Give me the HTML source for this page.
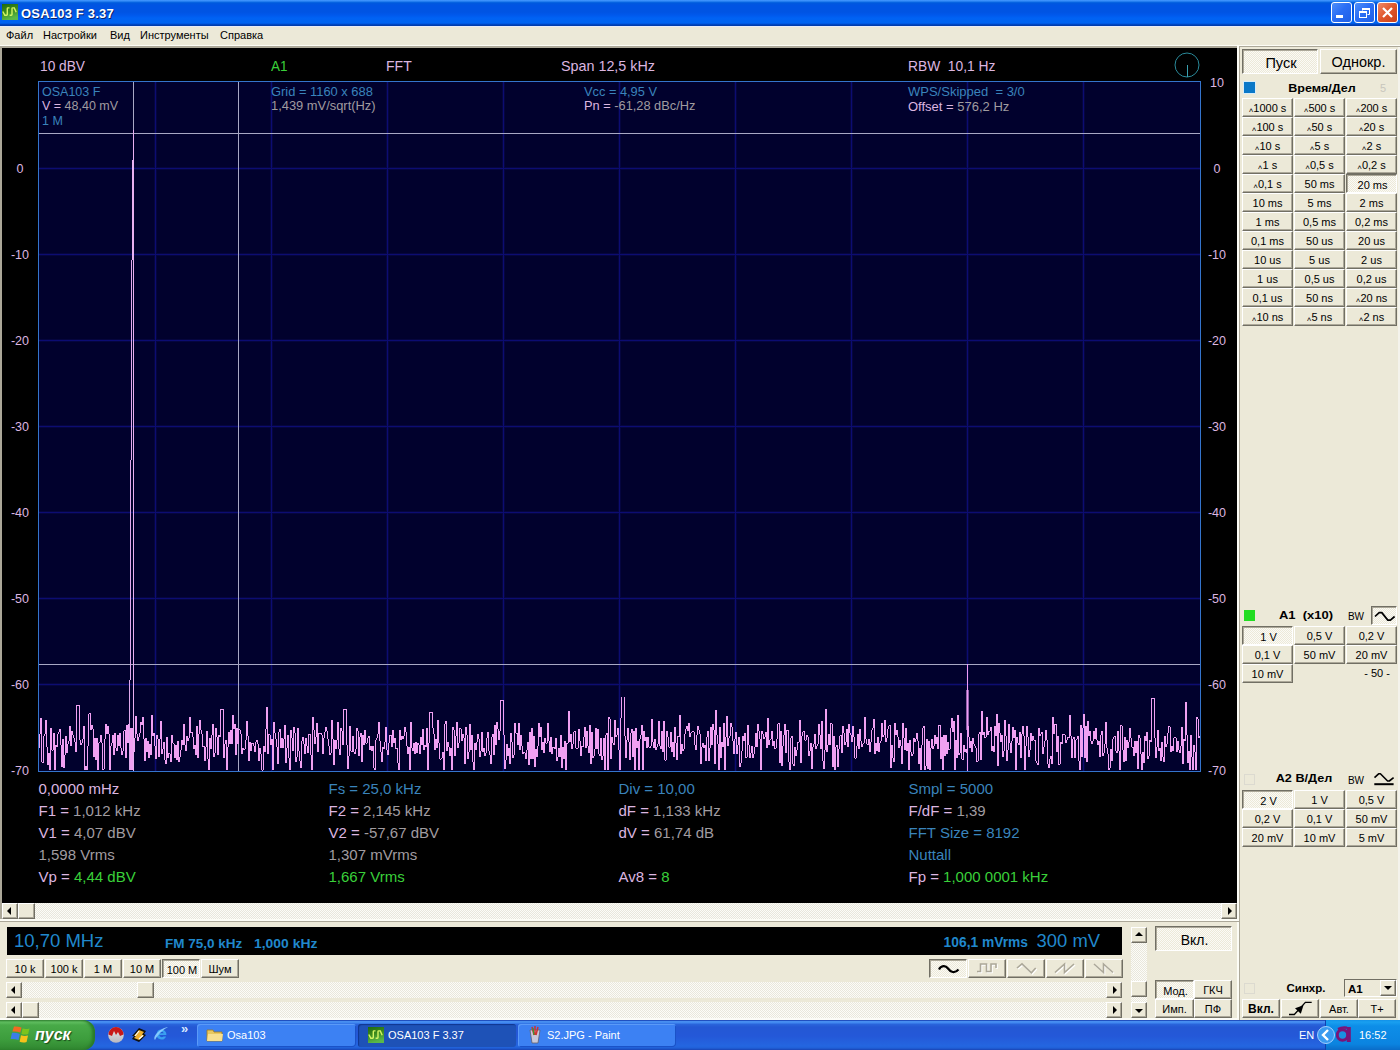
<!DOCTYPE html>
<html><head><meta charset="utf-8"><style>
html,body{margin:0;padding:0;width:1400px;height:1050px;overflow:hidden;background:#ece9d8;position:relative;font-family:"Liberation Sans", sans-serif;}
.t{position:absolute;white-space:pre;line-height:1;font-family:"Liberation Sans", sans-serif;}
.b{position:absolute;box-sizing:border-box;background:#ece9d8;}
.bu{border-top:1px solid #fff;border-left:1px solid #fff;border-right:1px solid #716f64;border-bottom:1px solid #716f64;box-shadow:inset -1px -1px 0 #aca899;}
.bd{border-top:1px solid #716f64;border-left:1px solid #716f64;border-right:1px solid #fff;border-bottom:1px solid #fff;box-shadow:inset 1px 1px 0 #aca899;background-color:#f4f3ee;background-image:repeating-conic-gradient(#fbfaf6 0 25%, #ece9d8 0 50%);background-size:2px 2px;}
svg{position:absolute;left:0;top:0;}
</style></head><body>
<div style="position:absolute;left:0;top:0;width:1400px;height:26px;background:linear-gradient(to bottom,#3d95ff 0px,#3a8ef8 1px,#0c6de6 2px,#0059dd 3px,#0054e3 5px,#0054e3 12px,#0058ec 15px,#0062f4 18px,#0064f0 23px,#0050d8 24px,#003dad 25px,#003dad 26px);"></div>
<svg width="16" height="16" style="left:2px;top:4px" viewBox="0 0 16 16"><defs><linearGradient id="ig" x1="0" y1="0" x2="0.3" y2="1"><stop offset="0" stop-color="#1e6a10"/><stop offset="0.5" stop-color="#3c8a1c"/><stop offset="1" stop-color="#5ab84a"/></linearGradient></defs><rect width="16" height="16" fill="url(#ig)"/><path d="M0.8 7.5L2.8 11.2H4.7Q5.3 11.2 5.3 10.5V4.6Q5.3 3.9 6 3.9H7.5M7.6 11.2H9.3Q10 11.2 10 10.5V4.6Q10 3.9 10.7 3.9H12.3L14.2 8.2" fill="none" stroke="#d4f464" stroke-width="1.4"/></svg>
<div class="t " style="left:21.0px;top:7.00px;font-size:13px;color:#fff;font-weight:bold;letter-spacing:0.2px;text-shadow:1px 1px 0 #0a246a;">OSA103 F 3.37</div>
<div style="position:absolute;left:1331px;top:2px;width:21px;height:21px;box-sizing:border-box;border:1px solid #fff;border-radius:3px;background:linear-gradient(135deg,#4f8ff9 0%,#2b6ef5 45%,#1f5fe6 100%);"></div>
<div style="position:absolute;left:1354px;top:2px;width:21px;height:21px;box-sizing:border-box;border:1px solid #fff;border-radius:3px;background:linear-gradient(135deg,#4f8ff9 0%,#2b6ef5 45%,#1f5fe6 100%);"></div>
<div style="position:absolute;left:1377px;top:2px;width:21px;height:21px;box-sizing:border-box;border:1px solid #fff;border-radius:3px;background:linear-gradient(135deg,#ef8a6a 0%,#e0562a 50%,#c8401c 100%);"></div>
<div style="position:absolute;left:1336px;top:15px;width:7px;height:3px;background:#fff;"></div>
<svg width="21" height="21" style="left:1354px;top:2px" viewBox="0 0 21 21"><rect x="5.5" y="9.5" width="7" height="6" fill="none" stroke="#fff" stroke-width="1"/><rect x="5" y="9" width="8" height="2" fill="#fff"/><path d="M8.5 8.5V6.5h7v6h-2" fill="none" stroke="#fff"/><rect x="8" y="6" width="8" height="2" fill="#fff"/></svg>
<svg width="21" height="21" style="left:1377px;top:2px" viewBox="0 0 21 21"><path d="M6 6L15 15M15 6L6 15" stroke="#fff" stroke-width="2.2"/></svg>
<div style="position:absolute;left:0px;top:26px;width:1400px;height:19px;background:#ece9d8;"></div>
<div style="position:absolute;left:0px;top:26px;width:1400px;height:1px;background:#e8ecf8;"></div>
<div style="position:absolute;left:0px;top:45px;width:1400px;height:1px;background:#fdfdf6;"></div>
<div style="position:absolute;left:0px;top:46px;width:1239px;height:2px;background:#aca899;"></div>
<div class="t " style="left:6.0px;top:29.69px;font-size:11px;color:#000;font-weight:normal;">Файл</div>
<div class="t " style="left:43.0px;top:29.69px;font-size:11px;color:#000;font-weight:normal;">Настройки</div>
<div class="t " style="left:110.0px;top:29.69px;font-size:11px;color:#000;font-weight:normal;">Вид</div>
<div class="t " style="left:140.0px;top:29.69px;font-size:11px;color:#000;font-weight:normal;">Инструменты</div>
<div class="t " style="left:220.0px;top:29.69px;font-size:11px;color:#000;font-weight:normal;">Справка</div>
<div style="position:absolute;left:0px;top:46px;width:2px;height:877px;background:#aca899;"></div>
<div style="position:absolute;left:2px;top:48px;width:1235px;height:855px;background:#000;"></div>
<div style="position:absolute;left:1237px;top:46px;width:2px;height:974px;background:#fdfdf6;"></div>
<div style="position:absolute;left:1239px;top:46px;width:1px;height:974px;background:#aca899;"></div>
<div style="position:absolute;left:1239px;top:46px;width:161px;height:1px;background:#aca899;"></div>
<svg width="1400" height="1050" style="left:0;top:0" viewBox="0 0 1400 1050" shape-rendering="crispEdges">
<rect x="38" y="81" width="1163" height="691" fill="#01012d"/>
<rect x="154" y="82" width="3" height="689" fill="#05053f"/>
<rect x="270" y="82" width="3" height="689" fill="#05053f"/>
<rect x="386" y="82" width="3" height="689" fill="#05053f"/>
<rect x="502" y="82" width="3" height="689" fill="#05053f"/>
<rect x="618" y="82" width="3" height="689" fill="#05053f"/>
<rect x="734" y="82" width="3" height="689" fill="#05053f"/>
<rect x="850" y="82" width="3" height="689" fill="#05053f"/>
<rect x="966" y="82" width="3" height="689" fill="#05053f"/>
<rect x="1082" y="82" width="3" height="689" fill="#05053f"/>
<rect x="39" y="167" width="1161" height="3" fill="#05053f"/>
<rect x="39" y="253" width="1161" height="3" fill="#05053f"/>
<rect x="39" y="339" width="1161" height="3" fill="#05053f"/>
<rect x="39" y="425" width="1161" height="3" fill="#05053f"/>
<rect x="39" y="511" width="1161" height="3" fill="#05053f"/>
<rect x="39" y="597" width="1161" height="3" fill="#05053f"/>
<rect x="39" y="683" width="1161" height="3" fill="#05053f"/>
<rect x="155" y="82" width="1" height="689" fill="#0c0c72"/>
<rect x="271" y="82" width="1" height="689" fill="#0c0c72"/>
<rect x="387" y="82" width="1" height="689" fill="#0c0c72"/>
<rect x="503" y="82" width="1" height="689" fill="#0c0c72"/>
<rect x="619" y="82" width="1" height="689" fill="#0c0c72"/>
<rect x="735" y="82" width="1" height="689" fill="#0c0c72"/>
<rect x="851" y="82" width="1" height="689" fill="#0c0c72"/>
<rect x="967" y="82" width="1" height="689" fill="#0c0c72"/>
<rect x="1083" y="82" width="1" height="689" fill="#0c0c72"/>
<rect x="39" y="168" width="1161" height="1" fill="#0c0c72"/>
<rect x="39" y="254" width="1161" height="1" fill="#0c0c72"/>
<rect x="39" y="340" width="1161" height="1" fill="#0c0c72"/>
<rect x="39" y="426" width="1161" height="1" fill="#0c0c72"/>
<rect x="39" y="512" width="1161" height="1" fill="#0c0c72"/>
<rect x="39" y="598" width="1161" height="1" fill="#0c0c72"/>
<rect x="39" y="684" width="1161" height="1" fill="#0c0c72"/>
<rect x="38" y="81" width="1163" height="1" fill="#3474cc"/>
<rect x="38" y="771" width="1163" height="1" fill="#3474cc"/>
<rect x="38" y="81" width="1" height="691" fill="#3474cc"/>
<rect x="1200" y="81" width="1" height="691" fill="#3474cc"/>
<rect x="39" y="133" width="1161" height="1" fill="#a8a8c4"/>
<rect x="39" y="664" width="1161" height="1" fill="#a8a8c4"/>
<rect x="133" y="82" width="1" height="689" fill="#a8a8c4"/>
<rect x="238" y="82" width="1" height="689" fill="#a8a8c4"/>
<path d="M39 734v14M40 718v16M41 718v44M42 762v1M43 736v27M44 734v2M45 720v14M46 720v27M47 747v18M48 753v12M49 753v17M50 728v42M51 728v22M52 750v1M53 733v17M54 733v37M55 745v25M56 745v2M57 734v13M58 732v2M59 729v3M60 729v16M61 745v22M62 739v28M63 739v29M64 755v13M65 736v19M66 736v17M67 744v9M68 741v3M69 726v15M70 726v20M71 731v15M72 731v4M73 735v3M74 738v4M75 742v10M76 705v47M77 705v1M78 705v1M79 705v35M80 740v5M81 743v2M82 739v4M83 726v13M84 726v44M85 766v4M86 766v4M87 746v24M88 714v32M89 713v1M90 713v17M91 725v5M92 725v4M93 729v28M94 738v19M95 738v22M96 738v22M97 738v32M98 743v27M99 742v1M100 735v7M101 735v8M102 743v27M103 769v1M104 739v30M105 724v15M106 724v10M107 726v8M108 726v8M109 734v36M110 746v24M111 743v3M112 735v8M113 735v20M114 733v22M115 733v15M116 748v3M117 735v16M118 735v11M119 733v13M120 733v15M121 748v7M122 751v4M123 731v20M124 730v1M125 730v28M126 725v33M127 725v18M128 724v19M129 724v46M130 728v42M131 728v42M132 728v42M133 728v24M134 738v14M135 716v22M136 716v18M137 734v7M138 737v4M139 733v4M140 722v11M141 722v3M142 717v8M143 717v22M144 739v22M145 738v23M146 738v14M147 741v11M148 741v17M149 744v14M150 744v11M151 715v40M152 715v21M153 733v3M154 733v13M155 746v13M156 735v24M157 735v4M158 739v18M159 739v18M160 721v18M161 721v33M162 749v5M163 742v7M164 742v18M165 760v4M166 737v27M167 737v21M168 753v5M169 753v1M170 754v8M171 735v27M172 735v8M173 743v1M174 744v14M175 745v13M176 745v15M177 741v19M178 741v21M179 757v5M180 750v7M181 740v10M182 740v5M183 724v21M184 724v21M185 745v6M186 736v15M187 736v5M188 738v3M189 717v21M190 717v16M191 732v1M192 732v5M193 737v12M194 745v4M195 745v10M196 726v29M197 726v32M198 734v24M199 720v14M200 720v10M201 730v4M202 734v13M203 746v1M204 746v15M205 747v14M206 731v16M207 731v28M208 759v11M209 738v32M210 738v11M211 735v14M212 724v11M213 724v33M214 753v4M215 728v25M216 728v9M217 737v18M218 735v20M219 735v2M220 709v28M221 709v1M222 709v1M223 709v49M224 744v14M225 740v4M226 740v30M227 747v23M228 732v15M229 732v12M230 730v14M231 730v14M232 715v29M233 715v14M234 724v5M235 724v31M236 728v27M237 728v16M238 729v15M239 729v1M240 730v4M241 734v20M242 748v6M243 748v2M244 749v1M245 740v9M246 721v19M247 721v15M248 736v25M249 742v19M250 742v9M251 743v8M252 743v1M253 743v3M254 746v6M255 742v10M256 740v2M257 740v4M258 744v17M259 748v13M260 748v6M261 754v16M262 770v1M263 746v24M264 746v6M265 729v23M266 707v22M267 707v47M268 734v20M269 734v1M270 735v10M271 739v6M272 739v31M273 722v48M274 722v11M275 733v6M276 739v8M277 747v17M278 732v32M279 729v3M280 729v19M281 738v10M282 738v10M283 739v9M284 725v14M285 725v38M286 748v15M287 735v13M288 735v23M289 758v12M290 730v40M291 730v8M292 738v13M293 727v24M294 727v6M295 733v29M296 757v5M297 728v29M298 728v23M299 751v10M300 761v7M301 741v27M302 737v4M303 737v7M304 744v10M305 738v16M306 738v8M307 746v7M308 734v19M309 734v1M310 734v21M311 755v15M312 717v53M313 717v13M314 730v14M315 737v7M316 723v14M317 723v29M318 733v19M319 733v1M320 733v1M321 733v2M322 735v19M323 738v16M324 732v6M325 727v5M326 727v4M327 731v8M328 739v7M329 746v9M330 753v2M331 720v33M332 720v19M333 739v26M334 740v25M335 740v9M336 740v9M337 722v18M338 722v27M339 749v6M340 728v27M341 728v3M342 731v14M343 709v36M344 709v1M345 709v1M346 709v36M347 745v24M348 756v13M349 726v30M350 726v25M351 751v1M352 736v16M353 736v16M354 752v2M355 749v5M356 728v21M357 728v3M358 731v25M359 737v19M360 733v4M361 733v29M362 735v27M363 735v10M364 730v15M365 730v13M366 743v1M367 738v5M368 736v2M369 736v14M370 746v4M371 746v5M372 746v5M373 746v22M374 768v2M375 740v30M376 738v2M377 734v4M378 722v12M379 722v19M380 741v11M381 752v10M382 747v15M383 747v2M384 742v7M385 727v15M386 727v23M387 750v5M388 743v12M389 735v8M390 735v1M391 735v12M392 730v17M393 730v13M394 738v5M395 738v11M396 748v1M397 748v15M398 763v7M399 730v40M400 730v10M401 736v4M402 736v3M403 736v3M404 727v9M405 727v5M406 732v14M407 746v8M408 747v7M409 747v23M410 722v48M411 722v26M412 748v3M413 743v8M414 743v11M415 742v12M416 742v11M417 743v10M418 743v2M419 745v9M420 737v17M421 737v8M422 729v16M423 729v21M424 745v5M425 745v2M426 728v19M427 728v42M428 743v27M429 712v31M430 712v1M431 712v1M432 712v16M433 728v6M434 734v16M435 739v11M436 739v9M437 720v28M438 720v23M439 743v16M440 759v1M441 758v1M442 752v6M443 752v18M444 724v46M445 721v3M446 721v30M447 742v9M448 742v5M449 747v9M450 748v8M451 748v22M452 727v43M453 727v3M454 730v26M455 736v20M456 722v14M457 722v26M458 743v5M459 728v15M460 728v1M461 729v12M462 734v7M463 734v4M464 738v26M465 727v37M466 727v8M467 735v24M468 752v7M469 724v28M470 724v26M471 735v15M472 735v27M473 762v8M474 743v27M475 743v7M476 742v8M477 734v8M478 734v5M479 739v18M480 751v6M481 732v19M482 732v20M483 748v4M484 748v8M485 753v3M486 738v15M487 732v6M488 732v19M489 751v4M490 755v9M491 737v27M492 734v3M493 734v21M494 725v30M495 725v20M496 722v23M497 722v7M498 729v11M499 731v9M500 700v31M501 700v1M502 700v1M503 700v35M504 735v34M505 760v9M506 744v16M507 744v12M508 748v8M509 748v16M510 733v31M511 733v9M512 742v16M513 755v3M514 723v32M515 723v10M516 733v1M517 733v12M518 723v22M519 723v27M520 735v15M521 735v11M522 746v8M523 752v2M524 752v1M525 753v6M526 750v9M527 742v8M528 742v23M529 732v33M530 732v27M531 728v31M532 728v31M533 736v23M534 736v31M535 749v18M536 749v8M537 746v11M538 723v23M539 723v14M540 727v10M541 727v23M542 742v8M543 742v11M544 738v15M545 738v5M546 743v1M547 723v20M548 723v18M549 741v11M550 737v15M551 737v17M552 747v7M553 747v1M554 747v2M555 738v11M556 738v23M557 757v4M558 748v9M559 748v9M560 735v22M561 735v33M562 747v21M563 747v12M564 741v18M565 741v29M566 743v27M567 743v1M568 711v32M569 711v31M570 734v8M571 734v15M572 744v5M573 732v12M574 731v1M575 731v17M576 748v1M577 748v1M578 729v19M579 729v12M580 741v15M581 746v10M582 746v1M583 737v10M584 727v10M585 727v21M586 731v17M587 731v15M588 746v7M589 725v28M590 725v39M591 732v32M592 732v26M593 756v2M594 749v7M595 728v21M596 728v21M597 729v20M598 729v25M599 754v2M600 738v18M601 738v22M602 756v4M603 738v18M604 738v32M605 735v35M606 733v2M607 733v37M608 717v53M609 717v2M610 719v40M611 737v22M612 737v6M613 743v2M614 720v25M615 720v17M616 735v2M617 728v7M618 728v22M619 750v20M620 718v52M621 697v21M624 697v39M625 736v22M626 740v18M627 728v12M628 728v14M629 742v18M630 733v27M631 729v4M632 729v28M633 731v26M634 731v39M635 728v42M636 728v20M637 741v7M638 741v29M639 739v31M640 735v4M641 725v10M642 725v45M643 731v39M644 731v10M645 737v4M646 737v11M647 737v11M648 737v10M649 747v1M650 746v2M651 719v27M652 719v23M653 742v6M654 739v9M655 739v11M656 747v3M657 744v3M658 721v23M659 721v25M660 746v3M661 731v18M662 731v21M663 721v31M664 721v39M665 760v1M666 731v29M667 731v6M668 737v10M669 747v1M670 732v15M671 732v20M672 742v10M673 742v15M674 727v30M675 727v16M676 743v17M677 736v24M678 736v1M679 715v22M680 715v39M681 744v10M682 744v7M683 749v2M684 734v15M685 729v5M686 726v3M687 726v5M688 723v8M689 723v14M690 733v4M691 732v1M692 731v1M693 731v1M694 732v13M695 745v5M696 735v15M697 726v9M698 726v4M699 730v4M700 734v30M701 747v17M702 743v4M703 743v5M704 745v3M705 745v16M706 737v24M707 731v6M708 731v30M709 748v13M710 727v21M711 727v18M712 724v21M713 724v6M714 730v34M715 710v54M716 710v25M717 735v9M718 744v26M719 727v43M720 727v31M721 742v16M722 742v5M723 723v24M724 723v47M725 737v33M726 716v21M727 716v30M728 738v8M729 736v2M730 723v13M731 723v4M732 727v14M733 741v13M734 739v15M735 732v7M736 732v22M737 745v9M738 737v8M739 737v30M740 763v4M741 751v12M742 736v15M743 736v5M744 733v8M745 733v25M746 757v1M747 725v32M748 725v20M749 745v13M750 753v5M751 746v7M752 746v12M753 754v4M754 747v7M755 733v14M756 733v14M757 724v23M758 724v7M759 731v8M760 739v31M761 731v39M762 731v3M763 734v5M764 737v2M765 732v5M766 732v16M767 718v30M768 718v27M769 740v5M770 739v1M771 731v8M772 731v15M773 741v5M774 741v8M775 748v1M776 739v9M777 724v15M778 723v1M779 723v40M780 731v32M781 731v35M782 746v20M783 735v11M784 724v11M785 724v29M786 730v23M787 730v1M788 730v32M789 762v8M790 738v32M791 736v2M792 736v28M793 764v2M794 747v19M795 747v9M796 750v6M797 742v8M798 742v1M799 720v22M800 720v43M801 736v27M802 732v4M803 731v1M804 731v9M805 740v1M806 735v5M807 735v2M808 737v19M809 751v5M810 743v8M811 743v26M812 747v22M813 744v3M814 734v10M815 734v15M816 746v3M817 744v2M818 724v20M819 724v11M820 735v14M821 721v28M822 721v40M823 761v8M824 750v19M825 709v41M826 709v43M827 745v7M828 734v11M829 734v11M830 723v22M831 723v1M832 724v43M833 736v31M834 736v34M835 747v23M836 745v2M837 745v22M838 749v18M839 736v13M840 735v1M841 735v18M842 726v27M843 726v7M844 733v12M845 742v3M846 729v13M847 729v18M848 724v23M849 724v9M850 733v2M851 735v7M852 726v16M853 726v11M854 737v21M855 758v1M856 746v12M857 734v12M858 734v15M859 729v20M860 729v12M861 741v6M862 744v3M863 743v1M864 717v26M865 717v22M866 739v5M867 744v1M868 739v6M869 739v13M870 742v10M871 730v12M872 728v2M873 719v9M874 719v35M875 743v11M876 743v8M877 737v14M878 737v15M879 743v9M880 741v2M881 723v18M882 723v14M883 735v2M884 720v15M885 720v22M886 738v4M887 729v9M888 726v3M889 725v1M890 725v43M891 745v23M892 745v13M893 758v4M894 723v39M895 723v12M896 730v5M897 730v7M898 737v11M899 740v8M900 740v6M901 746v18M902 723v41M903 723v15M904 738v12M905 728v22M906 728v23M907 743v8M908 743v27M909 740v30M910 740v12M911 752v4M912 754v2M913 738v16M914 738v4M915 739v3M916 733v6M917 733v8M918 741v23M919 748v16M920 748v22M921 745v25M922 728v17M923 726v2M924 726v44M925 766v4M926 739v27M927 739v30M928 741v28M929 741v29M930 748v22M931 739v9M932 739v10M933 746v3M934 735v11M935 735v9M936 737v7M937 737v12M938 725v24M939 725v1M940 725v34M941 737v22M942 737v33M943 735v35M944 735v21M945 735v21M946 735v19M947 742v12M948 742v8M949 749v1M950 728v21M951 718v10M952 718v14M953 721v11M954 721v49M955 740v30M956 740v18M957 715v43M958 715v40M959 753v2M960 733v20M961 733v26M962 759v1M963 745v15M964 745v7M965 749v3M966 749v4M967 726v27M968 726v11M969 737v11M970 741v7M971 741v11M972 738v14M973 738v6M974 744v2M975 746v2M976 748v14M977 761v1M978 734v27M979 732v2M980 732v28M981 711v49M982 711v24M983 732v3M984 732v6M985 737v1M986 717v20M987 717v18M988 731v4M989 731v1M990 727v4M991 727v24M992 746v5M993 746v6M994 726v26M995 726v10M996 714v22M997 714v52M998 723v43M999 723v10M1000 733v9M1001 735v7M1002 735v22M1003 751v6M1004 720v31M1005 720v16M1006 736v25M1007 750v11M1008 724v26M1009 724v19M1010 743v10M1011 741v12M1012 727v14M1013 727v11M1014 730v8M1015 730v40M1016 737v33M1017 737v6M1018 743v2M1019 732v13M1020 732v26M1021 734v24M1022 726v8M1023 726v10M1024 736v34M1025 746v24M1026 726v20M1027 726v11M1028 737v20M1029 750v7M1030 733v17M1031 733v8M1032 736v5M1033 736v4M1034 740v1M1035 740v21M1036 761v2M1037 763v2M1038 728v37M1039 728v8M1040 734v2M1041 732v2M1042 732v22M1043 747v7M1044 741v6M1045 730v11M1046 730v10M1047 740v24M1048 764v4M1049 759v9M1050 756v3M1051 756v8M1052 717v47M1053 717v17M1054 724v10M1055 724v1M1056 724v28M1057 736v16M1058 736v29M1059 764v1M1060 742v22M1061 742v2M1062 734v10M1063 734v1M1064 734v1M1065 735v8M1066 740v3M1067 737v3M1068 737v1M1069 715v23M1070 715v21M1071 736v22M1072 739v19M1073 737v2M1074 737v21M1075 740v18M1076 739v1M1077 736v3M1078 736v25M1079 761v9M1080 725v45M1081 725v32M1082 728v29M1083 714v14M1084 714v44M1085 726v32M1086 726v36M1087 721v41M1088 721v15M1089 731v5M1090 731v10M1091 741v3M1092 741v3M1093 731v10M1094 731v8M1095 728v11M1096 728v12M1097 740v5M1098 741v4M1099 741v16M1100 735v22M1101 731v4M1102 731v25M1103 753v3M1104 744v9M1105 722v22M1106 722v26M1107 748v6M1108 754v16M1109 768v2M1110 749v19M1111 749v12M1112 739v22M1113 737v2M1114 736v1M1115 736v15M1116 751v2M1117 731v22M1118 731v20M1119 751v19M1120 725v45M1121 725v1M1122 726v24M1123 750v12M1124 737v25M1125 737v24M1126 740v21M1127 740v8M1128 742v6M1129 728v14M1130 728v10M1131 738v9M1132 747v1M1133 747v9M1134 741v15M1135 741v12M1136 741v12M1137 741v28M1138 735v34M1139 735v3M1140 738v16M1141 754v16M1142 752v18M1143 752v11M1144 736v27M1145 736v5M1146 732v9M1147 732v27M1148 756v3M1149 740v16M1150 740v2M1151 698v44M1152 698v1M1153 698v1M1154 698v40M1155 738v20M1156 747v11M1157 730v17M1158 730v21M1159 748v3M1160 748v13M1161 742v19M1162 742v15M1163 757v5M1164 736v26M1165 736v11M1166 744v3M1167 733v11M1168 726v7M1169 726v1M1170 727v25M1171 746v6M1172 746v5M1173 738v13M1174 737v1M1175 737v1M1176 738v14M1177 741v11M1178 741v9M1179 750v3M1180 746v7M1181 727v19M1182 727v37M1183 739v25M1184 739v2M1185 702v39M1186 702v33M1187 735v28M1188 751v12M1189 751v19M1190 735v35M1191 735v22M1192 757v13M1193 745v25M1194 745v7M1195 752v18M1196 717v53M1197 717v2M1198 719v19M1199 736v2" stroke="#f0a0f2" stroke-width="1" transform="translate(0.5,0)" fill="none"/>
<rect x="133" y="130" width="1" height="641" fill="#e8b0f0"/>
<rect x="132" y="160" width="1" height="100" fill="#e8b0f0"/>
<rect x="131" y="260" width="1" height="200" fill="#e0a8ec"/>
<rect x="130" y="460" width="1" height="220" fill="#e0a8ec"/>
<rect x="129" y="680" width="1" height="90" fill="#e0a8ec"/>
<rect x="967" y="664" width="1" height="107" fill="#f09cf4"/>
<rect x="966" y="690" width="3" height="40" fill="#f09cf4" opacity="0.6"/>
<circle cx="1187" cy="65" r="12" fill="none" stroke="#2a8a9a" stroke-width="1" shape-rendering="auto"/>
<rect x="1187" y="53" width="1" height="24" fill="#000" opacity="0"/>
<rect x="1187" y="65" width="1" height="12" fill="#3aa0b0"/>
</svg>
<div class="t " style="left:40.0px;top:58.30px;font-size:15px;color:#dcb6e0;font-weight:normal;transform: scaleX(0.915);transform-origin:left top;">10 dBV</div>
<div class="t " style="left:271.0px;top:58.30px;font-size:15px;color:#3ad03a;font-weight:normal;transform: scaleX(0.9);transform-origin:left top;">A1</div>
<div class="t " style="left:386.0px;top:58.30px;font-size:15px;color:#dcb6e0;font-weight:normal;transform: scaleX(0.935);transform-origin:left top;">FFT</div>
<div class="t " style="left:561.0px;top:58.30px;font-size:15px;color:#dcb6e0;font-weight:normal;transform: scaleX(0.955);transform-origin:left top;">Span 12,5 kHz</div>
<div class="t " style="left:908.0px;top:58.30px;font-size:15px;color:#dcb6e0;font-weight:normal;transform: scaleX(0.92);transform-origin:left top;">RBW  10,1 Hz</div>
<div class="t " style="left:42.0px;top:86.42px;font-size:12.5px;color:#3a84bc;font-weight:normal;">OSA103 F</div>
<div class="t " style="left:42.0px;top:99.92px;font-size:12.5px;color:#000;font-weight:normal;"><span style="color:#dcb6e0">V = </span><span style="color:#a09ca0">48,40 mV</span></div>
<div class="t " style="left:42.0px;top:115.42px;font-size:12.5px;color:#3a84bc;font-weight:normal;">1 M</div>
<div class="t " style="left:271.0px;top:86.08px;font-size:12.9px;color:#3a84bc;font-weight:normal;">Grid = 1160 x 688</div>
<div class="t " style="left:271.0px;top:99.58px;font-size:12.9px;color:#a09ca0;font-weight:normal;">1,439 mV/sqrt(Hz)</div>
<div class="t " style="left:584.0px;top:86.16px;font-size:12.8px;color:#3a84bc;font-weight:normal;">Vcc = 4,95 V</div>
<div class="t " style="left:584.0px;top:99.66px;font-size:12.8px;color:#000;font-weight:normal;"><span style="color:#dcb6e0">Pn = </span><span style="color:#a09ca0">-61,28 dBc/Hz</span></div>
<div class="t " style="left:908.0px;top:85.00px;font-size:13px;color:#3a84bc;font-weight:normal;">WPS/Skipped  = 3/0</div>
<div class="t " style="left:908.0px;top:99.50px;font-size:13px;color:#000;font-weight:normal;"><span style="color:#dcb6e0">Offset = </span><span style="color:#a09ca0">576,2 Hz</span></div>
<div class="t " style="left:1217.0px;top:76.92px;font-size:12.5px;color:#dcb6e0;font-weight:normal;transform:translateX(-50%);transform-origin:center top;">10</div>
<div class="t " style="left:20.0px;top:162.92px;font-size:12.5px;color:#dcb6e0;font-weight:normal;transform:translateX(-50%);transform-origin:center top;">0</div>
<div class="t " style="left:1217.0px;top:162.92px;font-size:12.5px;color:#dcb6e0;font-weight:normal;transform:translateX(-50%);transform-origin:center top;">0</div>
<div class="t " style="left:20.0px;top:248.92px;font-size:12.5px;color:#dcb6e0;font-weight:normal;transform:translateX(-50%);transform-origin:center top;">-10</div>
<div class="t " style="left:1217.0px;top:248.92px;font-size:12.5px;color:#dcb6e0;font-weight:normal;transform:translateX(-50%);transform-origin:center top;">-10</div>
<div class="t " style="left:20.0px;top:334.92px;font-size:12.5px;color:#dcb6e0;font-weight:normal;transform:translateX(-50%);transform-origin:center top;">-20</div>
<div class="t " style="left:1217.0px;top:334.92px;font-size:12.5px;color:#dcb6e0;font-weight:normal;transform:translateX(-50%);transform-origin:center top;">-20</div>
<div class="t " style="left:20.0px;top:420.92px;font-size:12.5px;color:#dcb6e0;font-weight:normal;transform:translateX(-50%);transform-origin:center top;">-30</div>
<div class="t " style="left:1217.0px;top:420.92px;font-size:12.5px;color:#dcb6e0;font-weight:normal;transform:translateX(-50%);transform-origin:center top;">-30</div>
<div class="t " style="left:20.0px;top:506.92px;font-size:12.5px;color:#dcb6e0;font-weight:normal;transform:translateX(-50%);transform-origin:center top;">-40</div>
<div class="t " style="left:1217.0px;top:506.92px;font-size:12.5px;color:#dcb6e0;font-weight:normal;transform:translateX(-50%);transform-origin:center top;">-40</div>
<div class="t " style="left:20.0px;top:592.92px;font-size:12.5px;color:#dcb6e0;font-weight:normal;transform:translateX(-50%);transform-origin:center top;">-50</div>
<div class="t " style="left:1217.0px;top:592.92px;font-size:12.5px;color:#dcb6e0;font-weight:normal;transform:translateX(-50%);transform-origin:center top;">-50</div>
<div class="t " style="left:20.0px;top:678.92px;font-size:12.5px;color:#dcb6e0;font-weight:normal;transform:translateX(-50%);transform-origin:center top;">-60</div>
<div class="t " style="left:1217.0px;top:678.92px;font-size:12.5px;color:#dcb6e0;font-weight:normal;transform:translateX(-50%);transform-origin:center top;">-60</div>
<div class="t " style="left:20.0px;top:764.92px;font-size:12.5px;color:#dcb6e0;font-weight:normal;transform:translateX(-50%);transform-origin:center top;">-70</div>
<div class="t " style="left:1217.0px;top:764.92px;font-size:12.5px;color:#dcb6e0;font-weight:normal;transform:translateX(-50%);transform-origin:center top;">-70</div>
<div class="t " style="left:38.5px;top:781.30px;font-size:15px;color:#dcb6e0;font-weight:normal;">0,0000 mHz</div>
<div class="t " style="left:38.5px;top:803.30px;font-size:15px;color:#000;font-weight:normal;"><span style="color:#dcb6e0">F1 = </span><span style="color:#a09ca0">1,012 kHz</span></div>
<div class="t " style="left:38.5px;top:825.30px;font-size:15px;color:#000;font-weight:normal;"><span style="color:#dcb6e0">V1 = </span><span style="color:#a09ca0">4,07 dBV</span></div>
<div class="t " style="left:38.5px;top:847.30px;font-size:15px;color:#a09ca0;font-weight:normal;">1,598 Vrms</div>
<div class="t " style="left:38.5px;top:869.30px;font-size:15px;color:#000;font-weight:normal;"><span style="color:#dcb6e0">Vp = </span><span style="color:#3ad03a">4,44 dBV</span></div>
<div class="t " style="left:328.5px;top:781.30px;font-size:15px;color:#3a84bc;font-weight:normal;">Fs = 25,0 kHz</div>
<div class="t " style="left:328.5px;top:803.30px;font-size:15px;color:#000;font-weight:normal;"><span style="color:#dcb6e0">F2 = </span><span style="color:#a09ca0">2,145 kHz</span></div>
<div class="t " style="left:328.5px;top:825.30px;font-size:15px;color:#000;font-weight:normal;"><span style="color:#dcb6e0">V2 = </span><span style="color:#a09ca0">-57,67 dBV</span></div>
<div class="t " style="left:328.5px;top:847.30px;font-size:15px;color:#a09ca0;font-weight:normal;">1,307 mVrms</div>
<div class="t " style="left:328.5px;top:869.30px;font-size:15px;color:#3ad03a;font-weight:normal;">1,667 Vrms</div>
<div class="t " style="left:618.5px;top:781.30px;font-size:15px;color:#3a84bc;font-weight:normal;">Div = 10,00</div>
<div class="t " style="left:618.5px;top:803.30px;font-size:15px;color:#000;font-weight:normal;"><span style="color:#dcb6e0">dF = </span><span style="color:#a09ca0">1,133 kHz</span></div>
<div class="t " style="left:618.5px;top:825.30px;font-size:15px;color:#000;font-weight:normal;"><span style="color:#dcb6e0">dV = </span><span style="color:#a09ca0">61,74 dB</span></div>
<div class="t " style="left:618.5px;top:869.30px;font-size:15px;color:#000;font-weight:normal;"><span style="color:#dcb6e0">Av8 = </span><span style="color:#3ad03a">8</span></div>
<div class="t " style="left:908.5px;top:781.30px;font-size:15px;color:#3a84bc;font-weight:normal;">Smpl = 5000</div>
<div class="t " style="left:908.5px;top:803.30px;font-size:15px;color:#000;font-weight:normal;"><span style="color:#dcb6e0">F/dF = </span><span style="color:#a09ca0">1,39</span></div>
<div class="t " style="left:908.5px;top:825.30px;font-size:15px;color:#3a84bc;font-weight:normal;">FFT Size = 8192</div>
<div class="t " style="left:908.5px;top:847.30px;font-size:15px;color:#3a84bc;font-weight:normal;">Nuttall</div>
<div class="t " style="left:908.5px;top:869.30px;font-size:15px;color:#000;font-weight:normal;"><span style="color:#dcb6e0">Fp = </span><span style="color:#3ad03a">1,000 0001 kHz</span></div>
<div class="b bd" style="left:1242px;top:49px;width:76px;height:25px;"></div>
<div class="t " style="left:1281.0px;top:55.73px;font-size:14.5px;color:#000;font-weight:normal;transform:translateX(-50%);transform-origin:center top;">Пуск</div>
<div class="b bu" style="left:1320px;top:49px;width:77px;height:25px;"></div>
<div class="t " style="left:1358.5px;top:54.73px;font-size:14.5px;color:#000;font-weight:normal;transform:translateX(-50%);transform-origin:center top;">Однокр.</div>
<div style="position:absolute;left:1244px;top:82px;width:11px;height:11px;background:#0a78c8;box-shadow:0 0 0 1px #d8ecf8;"></div>
<div class="t " style="left:1321.5px;top:82.69px;font-size:11px;color:#000;font-weight:bold;transform:translateX(-50%) scaleX(1.14);transform-origin:center top;">Время/Дел</div>
<div class="t " style="left:1383.0px;top:82.69px;font-size:11px;color:#c8c6bc;font-weight:normal;transform:translateX(-50%);transform-origin:center top;">5</div>
<div class="b bu" style="left:1242px;top:98px;width:51px;height:19px;"></div>
<div class="t " style="left:1267.5px;top:102.69px;font-size:11px;color:#000;font-weight:normal;transform:translateX(-50%);transform-origin:center top;"><span style="font-size:8px;position:relative;top:1px">˄</span>1000 s</div>
<div class="b bu" style="left:1294px;top:98px;width:51px;height:19px;"></div>
<div class="t " style="left:1319.5px;top:102.69px;font-size:11px;color:#000;font-weight:normal;transform:translateX(-50%);transform-origin:center top;"><span style="font-size:8px;position:relative;top:1px">˄</span>500 s</div>
<div class="b bu" style="left:1346px;top:98px;width:51px;height:19px;"></div>
<div class="t " style="left:1371.5px;top:102.69px;font-size:11px;color:#000;font-weight:normal;transform:translateX(-50%);transform-origin:center top;"><span style="font-size:8px;position:relative;top:1px">˄</span>200 s</div>
<div class="b bu" style="left:1242px;top:117px;width:51px;height:19px;"></div>
<div class="t " style="left:1267.5px;top:121.69px;font-size:11px;color:#000;font-weight:normal;transform:translateX(-50%);transform-origin:center top;"><span style="font-size:8px;position:relative;top:1px">˄</span>100 s</div>
<div class="b bu" style="left:1294px;top:117px;width:51px;height:19px;"></div>
<div class="t " style="left:1319.5px;top:121.69px;font-size:11px;color:#000;font-weight:normal;transform:translateX(-50%);transform-origin:center top;"><span style="font-size:8px;position:relative;top:1px">˄</span>50 s</div>
<div class="b bu" style="left:1346px;top:117px;width:51px;height:19px;"></div>
<div class="t " style="left:1371.5px;top:121.69px;font-size:11px;color:#000;font-weight:normal;transform:translateX(-50%);transform-origin:center top;"><span style="font-size:8px;position:relative;top:1px">˄</span>20 s</div>
<div class="b bu" style="left:1242px;top:136px;width:51px;height:19px;"></div>
<div class="t " style="left:1267.5px;top:140.69px;font-size:11px;color:#000;font-weight:normal;transform:translateX(-50%);transform-origin:center top;"><span style="font-size:8px;position:relative;top:1px">˄</span>10 s</div>
<div class="b bu" style="left:1294px;top:136px;width:51px;height:19px;"></div>
<div class="t " style="left:1319.5px;top:140.69px;font-size:11px;color:#000;font-weight:normal;transform:translateX(-50%);transform-origin:center top;"><span style="font-size:8px;position:relative;top:1px">˄</span>5 s</div>
<div class="b bu" style="left:1346px;top:136px;width:51px;height:19px;"></div>
<div class="t " style="left:1371.5px;top:140.69px;font-size:11px;color:#000;font-weight:normal;transform:translateX(-50%);transform-origin:center top;"><span style="font-size:8px;position:relative;top:1px">˄</span>2 s</div>
<div class="b bu" style="left:1242px;top:155px;width:51px;height:19px;"></div>
<div class="t " style="left:1267.5px;top:159.69px;font-size:11px;color:#000;font-weight:normal;transform:translateX(-50%);transform-origin:center top;"><span style="font-size:8px;position:relative;top:1px">˄</span>1 s</div>
<div class="b bu" style="left:1294px;top:155px;width:51px;height:19px;"></div>
<div class="t " style="left:1319.5px;top:159.69px;font-size:11px;color:#000;font-weight:normal;transform:translateX(-50%);transform-origin:center top;"><span style="font-size:8px;position:relative;top:1px">˄</span>0,5 s</div>
<div class="b bu" style="left:1346px;top:155px;width:51px;height:19px;"></div>
<div class="t " style="left:1371.5px;top:159.69px;font-size:11px;color:#000;font-weight:normal;transform:translateX(-50%);transform-origin:center top;"><span style="font-size:8px;position:relative;top:1px">˄</span>0,2 s</div>
<div class="b bu" style="left:1242px;top:174px;width:51px;height:19px;"></div>
<div class="t " style="left:1267.5px;top:178.69px;font-size:11px;color:#000;font-weight:normal;transform:translateX(-50%);transform-origin:center top;"><span style="font-size:8px;position:relative;top:1px">˄</span>0,1 s</div>
<div class="b bu" style="left:1294px;top:174px;width:51px;height:19px;"></div>
<div class="t " style="left:1319.5px;top:178.69px;font-size:11px;color:#000;font-weight:normal;transform:translateX(-50%);transform-origin:center top;">50 ms</div>
<div class="b bd" style="left:1346px;top:174px;width:51px;height:19px;"></div>
<div class="t " style="left:1372.5px;top:179.69px;font-size:11px;color:#000;font-weight:normal;transform:translateX(-50%);transform-origin:center top;">20 ms</div>
<div class="b bu" style="left:1242px;top:193px;width:51px;height:19px;"></div>
<div class="t " style="left:1267.5px;top:197.69px;font-size:11px;color:#000;font-weight:normal;transform:translateX(-50%);transform-origin:center top;">10 ms</div>
<div class="b bu" style="left:1294px;top:193px;width:51px;height:19px;"></div>
<div class="t " style="left:1319.5px;top:197.69px;font-size:11px;color:#000;font-weight:normal;transform:translateX(-50%);transform-origin:center top;">5 ms</div>
<div class="b bu" style="left:1346px;top:193px;width:51px;height:19px;"></div>
<div class="t " style="left:1371.5px;top:197.69px;font-size:11px;color:#000;font-weight:normal;transform:translateX(-50%);transform-origin:center top;">2 ms</div>
<div class="b bu" style="left:1242px;top:212px;width:51px;height:19px;"></div>
<div class="t " style="left:1267.5px;top:216.69px;font-size:11px;color:#000;font-weight:normal;transform:translateX(-50%);transform-origin:center top;">1 ms</div>
<div class="b bu" style="left:1294px;top:212px;width:51px;height:19px;"></div>
<div class="t " style="left:1319.5px;top:216.69px;font-size:11px;color:#000;font-weight:normal;transform:translateX(-50%);transform-origin:center top;">0,5 ms</div>
<div class="b bu" style="left:1346px;top:212px;width:51px;height:19px;"></div>
<div class="t " style="left:1371.5px;top:216.69px;font-size:11px;color:#000;font-weight:normal;transform:translateX(-50%);transform-origin:center top;">0,2 ms</div>
<div class="b bu" style="left:1242px;top:231px;width:51px;height:19px;"></div>
<div class="t " style="left:1267.5px;top:235.69px;font-size:11px;color:#000;font-weight:normal;transform:translateX(-50%);transform-origin:center top;">0,1 ms</div>
<div class="b bu" style="left:1294px;top:231px;width:51px;height:19px;"></div>
<div class="t " style="left:1319.5px;top:235.69px;font-size:11px;color:#000;font-weight:normal;transform:translateX(-50%);transform-origin:center top;">50 us</div>
<div class="b bu" style="left:1346px;top:231px;width:51px;height:19px;"></div>
<div class="t " style="left:1371.5px;top:235.69px;font-size:11px;color:#000;font-weight:normal;transform:translateX(-50%);transform-origin:center top;">20 us</div>
<div class="b bu" style="left:1242px;top:250px;width:51px;height:19px;"></div>
<div class="t " style="left:1267.5px;top:254.69px;font-size:11px;color:#000;font-weight:normal;transform:translateX(-50%);transform-origin:center top;">10 us</div>
<div class="b bu" style="left:1294px;top:250px;width:51px;height:19px;"></div>
<div class="t " style="left:1319.5px;top:254.69px;font-size:11px;color:#000;font-weight:normal;transform:translateX(-50%);transform-origin:center top;">5 us</div>
<div class="b bu" style="left:1346px;top:250px;width:51px;height:19px;"></div>
<div class="t " style="left:1371.5px;top:254.69px;font-size:11px;color:#000;font-weight:normal;transform:translateX(-50%);transform-origin:center top;">2 us</div>
<div class="b bu" style="left:1242px;top:269px;width:51px;height:19px;"></div>
<div class="t " style="left:1267.5px;top:273.69px;font-size:11px;color:#000;font-weight:normal;transform:translateX(-50%);transform-origin:center top;">1 us</div>
<div class="b bu" style="left:1294px;top:269px;width:51px;height:19px;"></div>
<div class="t " style="left:1319.5px;top:273.69px;font-size:11px;color:#000;font-weight:normal;transform:translateX(-50%);transform-origin:center top;">0,5 us</div>
<div class="b bu" style="left:1346px;top:269px;width:51px;height:19px;"></div>
<div class="t " style="left:1371.5px;top:273.69px;font-size:11px;color:#000;font-weight:normal;transform:translateX(-50%);transform-origin:center top;">0,2 us</div>
<div class="b bu" style="left:1242px;top:288px;width:51px;height:19px;"></div>
<div class="t " style="left:1267.5px;top:292.69px;font-size:11px;color:#000;font-weight:normal;transform:translateX(-50%);transform-origin:center top;">0,1 us</div>
<div class="b bu" style="left:1294px;top:288px;width:51px;height:19px;"></div>
<div class="t " style="left:1319.5px;top:292.69px;font-size:11px;color:#000;font-weight:normal;transform:translateX(-50%);transform-origin:center top;">50 ns</div>
<div class="b bu" style="left:1346px;top:288px;width:51px;height:19px;"></div>
<div class="t " style="left:1371.5px;top:292.69px;font-size:11px;color:#000;font-weight:normal;transform:translateX(-50%);transform-origin:center top;"><span style="font-size:8px;position:relative;top:1px">˄</span>20 ns</div>
<div class="b bu" style="left:1242px;top:307px;width:51px;height:19px;"></div>
<div class="t " style="left:1267.5px;top:311.69px;font-size:11px;color:#000;font-weight:normal;transform:translateX(-50%);transform-origin:center top;"><span style="font-size:8px;position:relative;top:1px">˄</span>10 ns</div>
<div class="b bu" style="left:1294px;top:307px;width:51px;height:19px;"></div>
<div class="t " style="left:1319.5px;top:311.69px;font-size:11px;color:#000;font-weight:normal;transform:translateX(-50%);transform-origin:center top;"><span style="font-size:8px;position:relative;top:1px">˄</span>5 ns</div>
<div class="b bu" style="left:1346px;top:307px;width:51px;height:19px;"></div>
<div class="t " style="left:1371.5px;top:311.69px;font-size:11px;color:#000;font-weight:normal;transform:translateX(-50%);transform-origin:center top;"><span style="font-size:8px;position:relative;top:1px">˄</span>2 ns</div>
<div style="position:absolute;left:1244px;top:610px;width:11px;height:11px;background:#22dd22;"></div>
<div class="t " style="left:1306.0px;top:610.27px;font-size:11.5px;color:#000;font-weight:bold;transform:translateX(-50%) scaleX(1.13);transform-origin:center top;">A1  (x10)</div>
<div class="t " style="left:1356.0px;top:611.53px;font-size:10px;color:#000;font-weight:normal;transform:translateX(-50%);transform-origin:center top;">BW</div>
<div class="b bd" style="left:1371px;top:606px;width:26px;height:19px;"></div>
<svg width="26" height="19" style="left:1371px;top:606px" viewBox="0 0 26 19"><path d="M4 10.5L8.2 6.6H10.8L16.8 14.1H19.4L23.6 10.5" fill="none" stroke="#000" stroke-width="1.7" stroke-linejoin="round"/></svg>
<div class="b bd" style="left:1242px;top:626px;width:51px;height:19px;"></div>
<div class="t " style="left:1268.5px;top:631.69px;font-size:11px;color:#000;font-weight:normal;transform:translateX(-50%);transform-origin:center top;">1 V</div>
<div class="b bu" style="left:1294px;top:626px;width:51px;height:19px;"></div>
<div class="t " style="left:1319.5px;top:630.69px;font-size:11px;color:#000;font-weight:normal;transform:translateX(-50%);transform-origin:center top;">0,5 V</div>
<div class="b bu" style="left:1346px;top:626px;width:51px;height:19px;"></div>
<div class="t " style="left:1371.5px;top:630.69px;font-size:11px;color:#000;font-weight:normal;transform:translateX(-50%);transform-origin:center top;">0,2 V</div>
<div class="b bu" style="left:1242px;top:645px;width:51px;height:19px;"></div>
<div class="t " style="left:1267.5px;top:649.69px;font-size:11px;color:#000;font-weight:normal;transform:translateX(-50%);transform-origin:center top;">0,1 V</div>
<div class="b bu" style="left:1294px;top:645px;width:51px;height:19px;"></div>
<div class="t " style="left:1319.5px;top:649.69px;font-size:11px;color:#000;font-weight:normal;transform:translateX(-50%);transform-origin:center top;">50 mV</div>
<div class="b bu" style="left:1346px;top:645px;width:51px;height:19px;"></div>
<div class="t " style="left:1371.5px;top:649.69px;font-size:11px;color:#000;font-weight:normal;transform:translateX(-50%);transform-origin:center top;">20 mV</div>
<div class="b bu" style="left:1242px;top:664px;width:51px;height:19px;"></div>
<div class="t " style="left:1267.5px;top:668.69px;font-size:11px;color:#000;font-weight:normal;transform:translateX(-50%);transform-origin:center top;">10 mV</div>
<div class="t " style="left:1377.0px;top:667.69px;font-size:11px;color:#000;font-weight:normal;transform:translateX(-50%);transform-origin:center top;">- 50 -</div>
<div style="position:absolute;left:1244px;top:774px;width:11px;height:11px;box-sizing:border-box;border:1px solid #dcdad0;background:#ece9d8;"></div>
<div class="t " style="left:1304.0px;top:773.27px;font-size:11.5px;color:#000;font-weight:bold;transform:translateX(-50%) scaleX(1.1);transform-origin:center top;">A2 В/Дел</div>
<div class="t " style="left:1356.0px;top:775.53px;font-size:10px;color:#000;font-weight:normal;transform:translateX(-50%);transform-origin:center top;">BW</div>
<svg width="24" height="16" style="left:1373px;top:771px" viewBox="0 0 24 16"><path d="M1.5 6.6L5.6 2.8H7.4L14.6 10H16.3L20.6 6.6" fill="none" stroke="#000" stroke-width="1.6" stroke-linejoin="round"/><rect x="1.3" y="12.2" width="19.3" height="2" fill="#000"/></svg>
<div class="b bd" style="left:1242px;top:790px;width:51px;height:19px;"></div>
<div class="t " style="left:1268.5px;top:795.69px;font-size:11px;color:#000;font-weight:normal;transform:translateX(-50%);transform-origin:center top;">2 V</div>
<div class="b bu" style="left:1294px;top:790px;width:51px;height:19px;"></div>
<div class="t " style="left:1319.5px;top:794.69px;font-size:11px;color:#000;font-weight:normal;transform:translateX(-50%);transform-origin:center top;">1 V</div>
<div class="b bu" style="left:1346px;top:790px;width:51px;height:19px;"></div>
<div class="t " style="left:1371.5px;top:794.69px;font-size:11px;color:#000;font-weight:normal;transform:translateX(-50%);transform-origin:center top;">0,5 V</div>
<div class="b bu" style="left:1242px;top:809px;width:51px;height:19px;"></div>
<div class="t " style="left:1267.5px;top:813.69px;font-size:11px;color:#000;font-weight:normal;transform:translateX(-50%);transform-origin:center top;">0,2 V</div>
<div class="b bu" style="left:1294px;top:809px;width:51px;height:19px;"></div>
<div class="t " style="left:1319.5px;top:813.69px;font-size:11px;color:#000;font-weight:normal;transform:translateX(-50%);transform-origin:center top;">0,1 V</div>
<div class="b bu" style="left:1346px;top:809px;width:51px;height:19px;"></div>
<div class="t " style="left:1371.5px;top:813.69px;font-size:11px;color:#000;font-weight:normal;transform:translateX(-50%);transform-origin:center top;">50 mV</div>
<div class="b bu" style="left:1242px;top:828px;width:51px;height:19px;"></div>
<div class="t " style="left:1267.5px;top:832.69px;font-size:11px;color:#000;font-weight:normal;transform:translateX(-50%);transform-origin:center top;">20 mV</div>
<div class="b bu" style="left:1294px;top:828px;width:51px;height:19px;"></div>
<div class="t " style="left:1319.5px;top:832.69px;font-size:11px;color:#000;font-weight:normal;transform:translateX(-50%);transform-origin:center top;">10 mV</div>
<div class="b bu" style="left:1346px;top:828px;width:51px;height:19px;"></div>
<div class="t " style="left:1371.5px;top:832.69px;font-size:11px;color:#000;font-weight:normal;transform:translateX(-50%);transform-origin:center top;">5 mV</div>
<div style="position:absolute;left:1244px;top:983px;width:11px;height:11px;box-sizing:border-box;border:1px solid #dcdad0;background:#ece9d8;"></div>
<div class="t " style="left:1306.0px;top:983.27px;font-size:11.5px;color:#000;font-weight:bold;transform:translateX(-50%);transform-origin:center top;">Синхр.</div>
<div style="position:absolute;left:1344px;top:979px;width:53px;height:18px;box-sizing:border-box;border-top:1px solid #716f64;border-left:1px solid #716f64;border-bottom:1px solid #fff;border-right:1px solid #fff;background:#ece9d8;"></div>
<div class="t " style="left:1348.0px;top:984.27px;font-size:11.5px;color:#000;font-weight:bold;">A1</div>
<div class="b bu" style="left:1380px;top:980px;width:16px;height:16px;"></div>
<svg width="16" height="16" style="left:1380px;top:980px" viewBox="0 0 16 16"><path d="M4 6h8l-4 4z" fill="#000"/></svg>
<div class="b bu" style="left:1242px;top:999px;width:38px;height:19px;"></div>
<div class="t " style="left:1261.0px;top:1002.84px;font-size:12px;color:#000;font-weight:bold;transform:translateX(-50%);transform-origin:center top;">Вкл.</div>
<div class="b bu" style="left:1281px;top:999px;width:38px;height:19px;"></div>
<svg width="38" height="19" style="left:1281px;top:999px" viewBox="0 0 38 19"><path d="M8 15.5h5.3L24.4 3.4h6.3" fill="none" stroke="#000" stroke-width="1.3"/><path d="M14 9.3L22.5 6.3L19.8 14.8z" fill="#000"/></svg>
<div class="b bu" style="left:1320px;top:999px;width:38px;height:19px;"></div>
<div class="t " style="left:1339.0px;top:1003.69px;font-size:11px;color:#000;font-weight:normal;transform:translateX(-50%);transform-origin:center top;">Авт.</div>
<div class="b bu" style="left:1358px;top:999px;width:38px;height:19px;"></div>
<div class="t " style="left:1377.0px;top:1003.69px;font-size:11px;color:#000;font-weight:normal;transform:translateX(-50%);transform-origin:center top;">T+</div>
<div style="position:absolute;left:2px;top:903px;width:1235px;height:16px;background-color:#f4f3ee;background-image:repeating-conic-gradient(#fcfcf8 0 25%, #e9e7dc 0 50%);background-size:2px 2px;"></div>
<div class="b bu" style="left:2px;top:903px;width:16px;height:16px;"></div>
<svg width="16" height="16" style="left:2px;top:903px" viewBox="0 0 16 16"><path d="M5 8l4-4v8z" fill="#000"/></svg>
<div class="b bu" style="left:1221px;top:903px;width:16px;height:16px;"></div>
<svg width="16" height="16" style="left:1221px;top:903px" viewBox="0 0 16 16"><path d="M11 8l-4-4v8z" fill="#000"/></svg>
<div class="b bu" style="left:18px;top:903px;width:17px;height:16px;"></div>
<div style="position:absolute;left:0px;top:919px;width:1239px;height:2px;background:#fdfdf6;"></div>
<div style="position:absolute;left:0px;top:921px;width:1239px;height:1px;background:#aca899;"></div>
<div style="position:absolute;left:0px;top:922px;width:2px;height:98px;background:#ece9d8;"></div>
<div style="position:absolute;left:7px;top:927px;width:1115px;height:28px;background:#000;"></div>
<div class="t " style="left:14.0px;top:932.34px;font-size:18.5px;color:#2088cc;font-weight:normal;">10,70 MHz</div>
<div class="t " style="left:165.0px;top:936.57px;font-size:13.5px;color:#2088cc;font-weight:bold;">FM 75,0 kHz</div>
<div class="t " style="left:254.0px;top:936.57px;font-size:13.5px;color:#2088cc;font-weight:bold;transform: scaleX(1.03);transform-origin:left top;">1,000 kHz</div>
<div class="t " style="left:1028.0px;top:936.32px;font-size:13.8px;color:#2088cc;font-weight:bold;transform:translateX(-100%);transform-origin:right top;">106,1 mVrms</div>
<div class="t " style="left:1100.0px;top:932.42px;font-size:18.4px;color:#2088cc;font-weight:normal;transform:translateX(-100%);transform-origin:right top;">300 mV</div>
<div class="b bu" style="left:6px;top:959px;width:38px;height:19px;"></div>
<div class="t " style="left:25.0px;top:963.69px;font-size:11px;color:#000;font-weight:normal;transform:translateX(-50%);transform-origin:center top;">10 k</div>
<div class="b bu" style="left:45px;top:959px;width:38px;height:19px;"></div>
<div class="t " style="left:64.0px;top:963.69px;font-size:11px;color:#000;font-weight:normal;transform:translateX(-50%);transform-origin:center top;">100 k</div>
<div class="b bu" style="left:84px;top:959px;width:38px;height:19px;"></div>
<div class="t " style="left:103.0px;top:963.69px;font-size:11px;color:#000;font-weight:normal;transform:translateX(-50%);transform-origin:center top;">1 M</div>
<div class="b bu" style="left:123px;top:959px;width:38px;height:19px;"></div>
<div class="t " style="left:142.0px;top:963.69px;font-size:11px;color:#000;font-weight:normal;transform:translateX(-50%);transform-origin:center top;">10 M</div>
<div class="b bd" style="left:162px;top:959px;width:38px;height:19px;"></div>
<div class="t " style="left:182.0px;top:964.69px;font-size:11px;color:#000;font-weight:normal;transform:translateX(-50%);transform-origin:center top;">100 M</div>
<div class="b bu" style="left:201px;top:959px;width:38px;height:19px;"></div>
<div class="t " style="left:220.0px;top:963.69px;font-size:11px;color:#000;font-weight:normal;transform:translateX(-50%);transform-origin:center top;">Шум</div>
<div class="b bd" style="left:929px;top:959px;width:38px;height:19px;"></div>
<svg width="38" height="19" style="left:929px;top:959px" viewBox="0 0 38 19"><path d="M10 10.5C12 6.5 16.5 6 19 9.5S25.5 15 29.5 10.5" fill="none" stroke="#000" stroke-width="2.2"/></svg>
<div class="b bu" style="left:968px;top:959px;width:38px;height:19px;"></div>
<svg width="38" height="19" style="left:968px;top:959px" viewBox="0 0 38 19"><path d="M9 12.5h3.5v-7.5h6v7.5h4.5v-7.5h5v4" fill="none" stroke="#fff" stroke-width="1.6" transform="translate(1,1)"/><path d="M9 12.5h3.5v-7.5h6v7.5h4.5v-7.5h5v4" fill="none" stroke="#aca899" stroke-width="1.6"/></svg>
<div class="b bu" style="left:1007px;top:959px;width:38px;height:19px;"></div>
<svg width="38" height="19" style="left:1007px;top:959px" viewBox="0 0 38 19"><path d="M10 9L15 4.8L24.4 13.8L28.7 9" fill="none" stroke="#fff" stroke-width="1.6" transform="translate(1,1)"/><path d="M10 9L15 4.8L24.4 13.8L28.7 9" fill="none" stroke="#aca899" stroke-width="1.6"/></svg>
<div class="b bu" style="left:1046px;top:959px;width:38px;height:19px;"></div>
<svg width="38" height="19" style="left:1046px;top:959px" viewBox="0 0 38 19"><path d="M9 13.5L18.5 5V13.5L28 5" fill="none" stroke="#fff" stroke-width="1.6" transform="translate(1,1)"/><path d="M9 13.5L18.5 5V13.5L28 5" fill="none" stroke="#aca899" stroke-width="1.6"/></svg>
<div class="b bu" style="left:1085px;top:959px;width:38px;height:19px;"></div>
<svg width="38" height="19" style="left:1085px;top:959px" viewBox="0 0 38 19"><path d="M9 5L18.5 13.5V5L28 13.5" fill="none" stroke="#fff" stroke-width="1.6" transform="translate(1,1)"/><path d="M9 5L18.5 13.5V5L28 13.5" fill="none" stroke="#aca899" stroke-width="1.6"/></svg>
<div style="position:absolute;left:6px;top:982px;width:1116px;height:16px;background-color:#f4f3ee;background-image:repeating-conic-gradient(#fcfcf8 0 25%, #e9e7dc 0 50%);background-size:2px 2px;"></div>
<div class="b bu" style="left:6px;top:982px;width:16px;height:16px;"></div>
<svg width="16" height="16" style="left:6px;top:982px" viewBox="0 0 16 16"><path d="M5 8l4-4v8z" fill="#000"/></svg>
<div class="b bu" style="left:1106px;top:982px;width:16px;height:16px;"></div>
<svg width="16" height="16" style="left:1106px;top:982px" viewBox="0 0 16 16"><path d="M11 8l-4-4v8z" fill="#000"/></svg>
<div class="b bu" style="left:137px;top:982px;width:17px;height:16px;"></div>
<div style="position:absolute;left:6px;top:1002px;width:1116px;height:16px;background-color:#f4f3ee;background-image:repeating-conic-gradient(#fcfcf8 0 25%, #e9e7dc 0 50%);background-size:2px 2px;"></div>
<div class="b bu" style="left:6px;top:1002px;width:16px;height:16px;"></div>
<svg width="16" height="16" style="left:6px;top:1002px" viewBox="0 0 16 16"><path d="M5 8l4-4v8z" fill="#000"/></svg>
<div class="b bu" style="left:1106px;top:1002px;width:16px;height:16px;"></div>
<svg width="16" height="16" style="left:1106px;top:1002px" viewBox="0 0 16 16"><path d="M11 8l-4-4v8z" fill="#000"/></svg>
<div class="b bu" style="left:22px;top:1002px;width:17px;height:16px;"></div>
<div style="position:absolute;left:1131px;top:927px;width:16px;height:91px;background-color:#f4f3ee;background-image:repeating-conic-gradient(#fcfcf8 0 25%, #e9e7dc 0 50%);background-size:2px 2px;"></div>
<div class="b bu" style="left:1131px;top:927px;width:16px;height:16px;"></div>
<svg width="16" height="16" style="left:1131px;top:927px" viewBox="0 0 16 16"><path d="M8 5l4 4H4z" fill="#000"/></svg>
<div class="b bu" style="left:1131px;top:981px;width:16px;height:16px;"></div>
<div class="b bu" style="left:1131px;top:1002px;width:16px;height:16px;"></div>
<svg width="16" height="16" style="left:1131px;top:1002px" viewBox="0 0 16 16"><path d="M8 11l4-4H4z" fill="#000"/></svg>
<div class="b bd" style="left:1155px;top:926px;width:77px;height:25px;"></div>
<div class="t " style="left:1194.5px;top:933.15px;font-size:14px;color:#000;font-weight:normal;transform:translateX(-50%);transform-origin:center top;">Вкл.</div>
<div class="b bd" style="left:1155px;top:980px;width:39px;height:19px;"></div>
<div class="t " style="left:1175.5px;top:985.69px;font-size:11px;color:#000;font-weight:normal;transform:translateX(-50%);transform-origin:center top;">Мод.</div>
<div class="b bu" style="left:1194px;top:980px;width:38px;height:19px;"></div>
<div class="t " style="left:1213.0px;top:984.69px;font-size:11px;color:#000;font-weight:normal;transform:translateX(-50%);transform-origin:center top;">ГКЧ</div>
<div class="b bu" style="left:1155px;top:999px;width:39px;height:19px;"></div>
<div class="t " style="left:1174.5px;top:1003.69px;font-size:11px;color:#000;font-weight:normal;transform:translateX(-50%);transform-origin:center top;">Имп.</div>
<div class="b bu" style="left:1194px;top:999px;width:38px;height:19px;"></div>
<div class="t " style="left:1213.0px;top:1003.69px;font-size:11px;color:#000;font-weight:normal;transform:translateX(-50%);transform-origin:center top;">ПФ</div>
<div style="position:absolute;left:0px;top:1018px;width:1239px;height:2px;background:#fbfbf6;"></div>
<div style="position:absolute;left:0;top:1020px;width:1400px;height:30px;background:linear-gradient(to bottom,#2050c0 0px,#2050c0 1px,#4a90f0 1px,#4088f0 3px,#2a66dc 4px,#2458d4 7px,#2458d8 16px,#2466e0 26px,#2060d8 28px,#1a44b4 30px);"></div>
<div style="position:absolute;left:0;top:1020px;width:95px;height:30px;border-radius:0 12px 12px 0;background:linear-gradient(to bottom,#3a8a3a 0px,#62c062 2px,#48aa48 5px,#3c9c3c 20px,#308630 30px);box-shadow:inset -3px 0 3px #2a7a2a;"></div>
<svg width="22" height="20" style="left:8px;top:1025px" viewBox="8 1025 22 20"><path d="M14 1026.5Q17.5 1026 21.5 1027.6L20.3 1032.6Q16.5 1031 12.4 1031.5z" fill="#f26a22"/><path d="M22.6 1028.6Q26 1029.5 29.5 1028.4L28.2 1034Q24.8 1035 21.4 1034z" fill="#7ac41e"/><path d="M12 1032.8Q16 1032.3 19.8 1034L18.5 1040Q14.5 1038.5 10.6 1039z" fill="#3a7ee8"/><path d="M21 1035.3Q24.6 1036.5 28 1035.5L26.6 1042Q23 1043.2 19.6 1041.8z" fill="#f6c21a"/></svg>
<div class="t " style="left:35.0px;top:1027.46px;font-size:16px;color:#fff;font-weight:bold;font-style:italic;text-shadow:1px 1px 1px #1a4a1a;">пуск</div>
<svg width="20" height="20" style="left:106px;top:1025px" viewBox="0 0 20 20"><defs><linearGradient id="rg" x1="0" y1="0" x2="0" y2="1"><stop offset="0" stop-color="#e8e8e8"/><stop offset="1" stop-color="#b8b8c0"/></linearGradient></defs><circle cx="10" cy="10" r="7.8" fill="url(#rg)"/><path d="M2.5 9.5a7.5 7.5 0 0 1 15 0 L14 11 L12 7 L10 10 L8 6 L6 11z" fill="#c81818"/></svg>
<svg width="18" height="18" style="left:130px;top:1026px" viewBox="0 0 18 18"><path d="M2 10 L9 2 L16 5 L14 8 L16 9 L9 16 L2 13 L4 10z" fill="#111"/><path d="M4 10 L9 4 L14 6 L12 8.5 L14 9.5 L9 14 L4 12 L6 10z" fill="#f0b030"/><path d="M5 10 L9 5" stroke="#fff" stroke-width="1.2"/><path d="M9 13 L13 9.5" stroke="#fff" stroke-width="1.2"/></svg>
<svg width="18" height="18" style="left:152px;top:1025px" viewBox="0 0 18 18"><path d="M9.5 4.5a5 5 0 1 0 4.6 7h-2.6a2.6 2.6 0 0 1-4.3-1.5h7.2a5 5 0 0 0-4.9-5.5zM7.3 8.3a2.4 2.4 0 0 1 4.4 0z" fill="#3aa0f0"/><path d="M3 15 C0 12 8 3 16 2 C12 4 6 9 3 15z" fill="#8ed0ff" opacity="0.9"/></svg>
<div class="t " style="left:181.0px;top:1022.00px;font-size:13px;color:#d8e8ff;font-weight:bold;">»</div>
<div style="position:absolute;left:197px;top:1024px;width:159px;height:23px;border-radius:3px;background:#3c81f3;box-shadow:inset 1px 1px 0 #5a9af8, inset -1px -1px 0 #1a52c8;"></div>
<div style="position:absolute;left:358px;top:1024px;width:158px;height:23px;border-radius:3px;background:#1e52b7;box-shadow:inset 1px 1px 1px #0f3690;"></div>
<div style="position:absolute;left:518px;top:1024px;width:158px;height:23px;border-radius:3px;background:#3c81f3;box-shadow:inset 1px 1px 0 #5a9af8, inset -1px -1px 0 #1a52c8;"></div>
<svg width="18" height="16" style="left:206px;top:1027px" viewBox="0 0 18 16"><path d="M1 3h6l1 2h8v9H1z" fill="#e8c860" stroke="#a07820" stroke-width="0.8"/><path d="M2 7h15l-1 7H1z" fill="#f8e090"/></svg>
<div class="t " style="left:227.0px;top:1029.69px;font-size:11px;color:#fff;font-weight:normal;">Osa103</div>
<svg width="16" height="16" style="left:368px;top:1027px" viewBox="0 0 16 16"><defs><linearGradient id="ig2" x1="0" y1="0" x2="0.3" y2="1"><stop offset="0" stop-color="#1e6a10"/><stop offset="0.5" stop-color="#3c8a1c"/><stop offset="1" stop-color="#5ab84a"/></linearGradient></defs><rect width="16" height="16" fill="url(#ig2)"/><path d="M0.8 7.5L2.8 11.2H4.7Q5.3 11.2 5.3 10.5V4.6Q5.3 3.9 6 3.9H7.5M7.6 11.2H9.3Q10 11.2 10 10.5V4.6Q10 3.9 10.7 3.9H12.3L14.2 8.2" fill="none" stroke="#d4f464" stroke-width="1.4"/></svg>
<div class="t " style="left:388.0px;top:1029.69px;font-size:11px;color:#fff;font-weight:normal;">OSA103 F 3.37</div>
<svg width="16" height="18" style="left:527px;top:1026px" viewBox="0 0 16 18"><path d="M3 4h10l-2 13H5z" fill="#c8c8d8" stroke="#606070" stroke-width="0.8"/><path d="M5 1l2 8M8 0v9M11 1l-2 8" stroke="#d03030" stroke-width="1.5"/><path d="M6 2l1 7" stroke="#30a030" stroke-width="1.2"/></svg>
<div class="t " style="left:547.0px;top:1029.69px;font-size:11px;color:#fff;font-weight:normal;">S2.JPG - Paint</div>
<div style="position:absolute;left:1325px;top:1020px;width:75px;height:30px;background:linear-gradient(to bottom,#1290e8 0px,#19a0f0 2px,#0d8ee8 6px,#0b84e0 24px,#0a6cc8 30px);border-left:1px solid #1042af;"></div>
<div class="t " style="left:1299.0px;top:1029.69px;font-size:11px;color:#fff;font-weight:normal;">EN</div>
<svg width="20" height="20" style="left:1316px;top:1025px" viewBox="0 0 20 20"><circle cx="10" cy="10" r="8.5" fill="#3a9af0" stroke="#a0d0ff" stroke-width="1"/><path d="M12 5l-5 5 5 5" fill="none" stroke="#fff" stroke-width="2.4"/></svg>
<svg width="16" height="17" style="left:1336px;top:1026px" viewBox="0 0 16 17"><circle cx="6.5" cy="9" r="5.2" fill="#1a90e0" stroke="#7a1478" stroke-width="3"/><rect x="10.8" y="1" width="4" height="15" fill="#7a1478"/><path d="M2 3.2Q6 1 11 1.8" fill="none" stroke="#7a1478" stroke-width="2.5"/></svg>
<div class="t " style="left:1359.0px;top:1029.69px;font-size:11px;color:#fff;font-weight:normal;">16:52</div>
<div style="position:absolute;left:1398px;top:47px;width:2px;height:973px;background:#f4f3ec;"></div>
</body></html>
